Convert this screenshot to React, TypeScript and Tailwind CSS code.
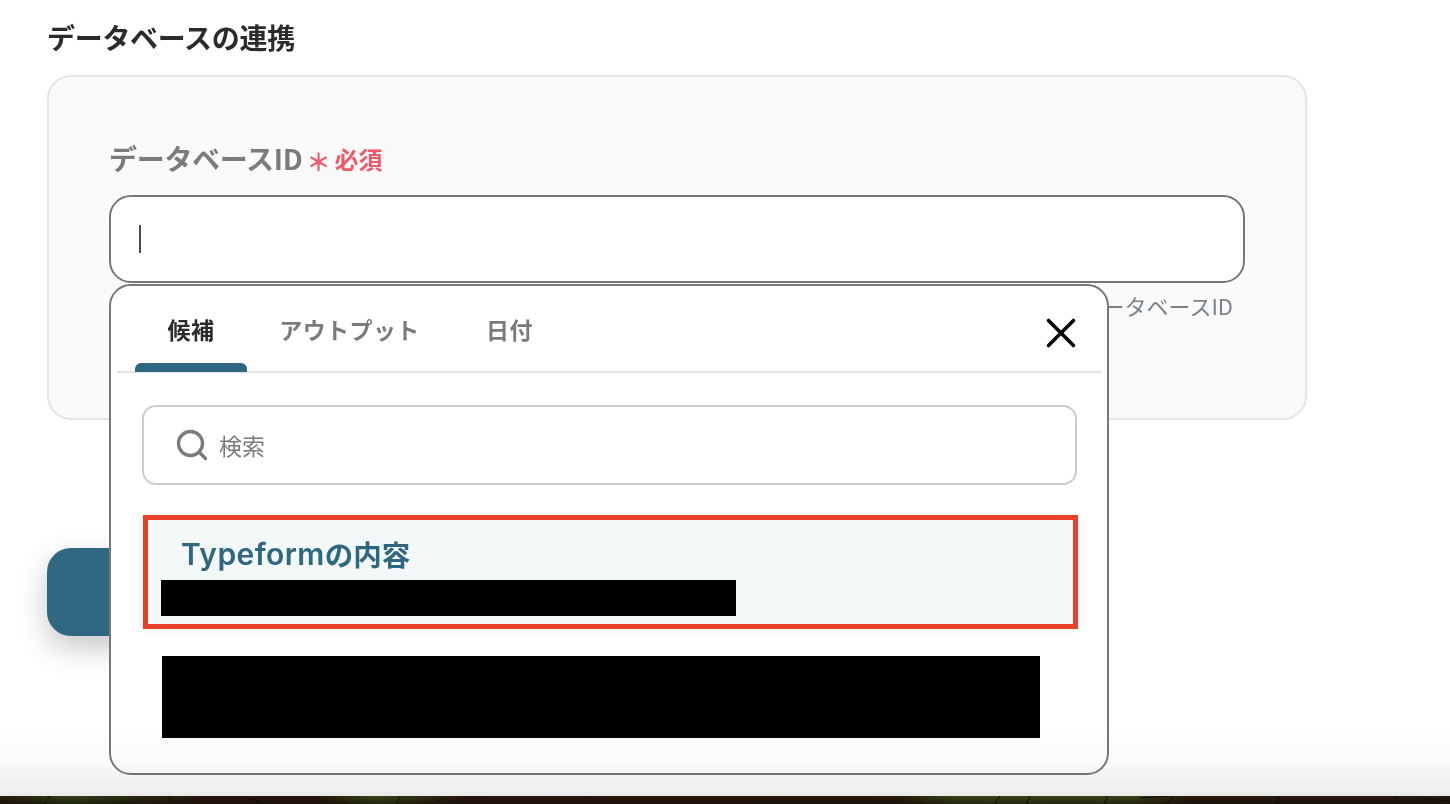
import React from "react";
import { Search, X } from "lucide-react";

const font = "font-['Noto_Sans_CJK_JP','Noto_Sans',sans-serif]";

function Tab({ label, active }: { label: string; active?: boolean }) {
  return (
    <div
      className={`flex h-[87px] items-center justify-center pt-[1px] text-[23px] font-bold tracking-[0.4px] ${
        active ? "text-[#2b2b2b]" : "text-[#7b7b7b]"
      }`}
    >
      {label}
    </div>
  );
}

function Picker() {
  return (
    <div className="absolute left-[109px] top-[284px] h-[491px] w-[1000px] rounded-[22px] border-2 border-[#777] bg-white px-[6px]">
      {/* tabs */}
      <div className="relative flex h-[87px] items-center border-b-2 border-[#e4e4e4] pl-[18px]">
        <div className="relative w-[112px]">
          <Tab label="候補" active />
          <div className="absolute bottom-0 left-0 h-[9px] w-[112px] rounded-t-[6px] bg-[#2f6780]" />
        </div>
        <div className="ml-[32px] w-[141px]">
          <Tab label="アウトプット" />
        </div>
        <div className="ml-[66px] w-[47px]">
          <Tab label="日付" />
        </div>
        <button className="ml-auto mr-[15px] mt-[8px] text-black">
          <X size={50} strokeWidth={1.7} />
        </button>
      </div>

      {/* search */}
      <div className="ml-[25px] mr-[24px] mt-[32px] flex h-[80px] items-center rounded-[14px] border-2 border-[#cccccc] pl-[30px]">
        <Search size={36} strokeWidth={2.2} className="text-[#7b7b7b]" />
        <span className="ml-[9px] text-[23px] text-[#7b7b7b]">検索</span>
      </div>

      {/* options */}
      <div className="ml-[26px] mr-[23px] mt-[30px] h-[114px] border-[5px] border-[#e8412a] bg-[#f3f8f8] pl-[13px] shadow-[0_4px_0_0_#f5fafa,-4px_0_0_0_#f5fafa]">
        <div className="flex h-[60px] items-end pb-[8px] pl-[20px] font-semibold leading-[36px] text-[#2f6780]">
          <span className="font-['Inter','Noto_Sans_CJK_JP',sans-serif] text-[30px] tracking-[0.4px]">Typeform</span>
          <span className="text-[28.5px]">の内容</span>
        </div>
        <div className="h-[36px] w-[575px] bg-black" />
      </div>
      <div className="ml-[45px] mt-[27px] h-[82px] w-[878px] bg-black" />
    </div>
  );
}

export default function App() {
  return (
    <div className={`relative flex h-[804px] w-[1450px] flex-col overflow-hidden bg-white ${font}`}>
      <div className="h-[796px] pl-[47px]">
        <h2 className="flex h-[75px] items-center pb-[2px] text-[28px] font-bold tracking-[-0.3px] text-[#2b2b2b]">
          データベースの連携
        </h2>

        <div className="h-[345px] w-[1260px] rounded-[24px] border-2 border-[#e3e5e8] bg-[#fafafa] px-[60px] pt-[63px]">
          <div className="flex h-[40px] items-center pb-[4px] text-[#7b7b7b]">
            <span className="text-[28px] font-bold tracking-[-0.3px]">データベースID</span>
            <span className="ml-[4px] mt-[6px] w-[24px] text-center text-[24px] font-bold leading-none text-[#ef5a67]">＊</span>
            <span className="ml-[4px] mt-[2px] text-[24px] font-bold text-[#ef5a67]">必須</span>
          </div>
          <div className="mt-[15px] flex h-[88px] w-[1136px] items-center rounded-[22px] border-2 border-[#777] bg-white pl-[28px]">
            <div className="h-[28px] w-[2px] bg-[#4a4a4a]" />
          </div>
          <div className="mt-[7px] w-[1124px] text-right text-[22px] leading-[30px] text-[#7a828a]">
            連携するデータベースID
          </div>
        </div>

        <div className="mt-[128px] h-[88px] w-[300px] rounded-[24px] bg-[#2f6780] shadow-[0_12px_30px_rgba(0,0,0,0.22)]" />
      </div>

      <Picker />

      {/* window edge fade and the desktop behind it */}
      <div className="pointer-events-none absolute inset-x-0 bottom-[8px] h-[70px] bg-gradient-to-b from-white via-[#fafafa] to-[#ebebeb] mix-blend-multiply" />
      <svg className="h-[8px] w-[1450px] shrink-0" viewBox="0 0 1450 8" preserveAspectRatio="none">
        <defs>
          <linearGradient id="ground" x1="0" x2="1" y1="0" y2="0">
            <stop offset="0" stopColor="#2a1c0e" />
            <stop offset="0.05" stopColor="#33401a" />
            <stop offset="0.09" stopColor="#2c2a12" />
            <stop offset="0.14" stopColor="#2a170c" />
            <stop offset="0.22" stopColor="#2a170c" />
            <stop offset="0.26" stopColor="#3a4518" />
            <stop offset="0.32" stopColor="#2a170c" />
            <stop offset="0.62" stopColor="#2a1a0d" />
            <stop offset="0.66" stopColor="#3a4418" />
            <stop offset="0.78" stopColor="#3a4018" />
            <stop offset="0.82" stopColor="#2a1a0d" />
            <stop offset="1" stopColor="#2a1a10" />
          </linearGradient>
          <linearGradient id="groundShade" x1="0" x2="0" y1="0" y2="1">
            <stop offset="0" stopColor="#000" stopOpacity="0" />
            <stop offset="1" stopColor="#000" stopOpacity="0.4" />
          </linearGradient>
        </defs>
        <rect width="1450" height="8" fill="url(#ground)" />
        <rect width="1450" height="8" fill="url(#groundShade)" />
        <path
          d="M50 0l-6 8M170 0v8M248 2l16 5M400 0l-4 8M445 1l-12 7M490 0v8M590 1l-8 7M1000 0l-6 8M1030 0l-4 8M1108 0l-4 8M1140 2l30-2M1168 8l6-8M1280 0l-4 8M1395 0v8M1420 2l30 3"
          stroke="#120d06"
          strokeWidth="1"
          fill="none"
        />
      </svg>
    </div>
  );
}
